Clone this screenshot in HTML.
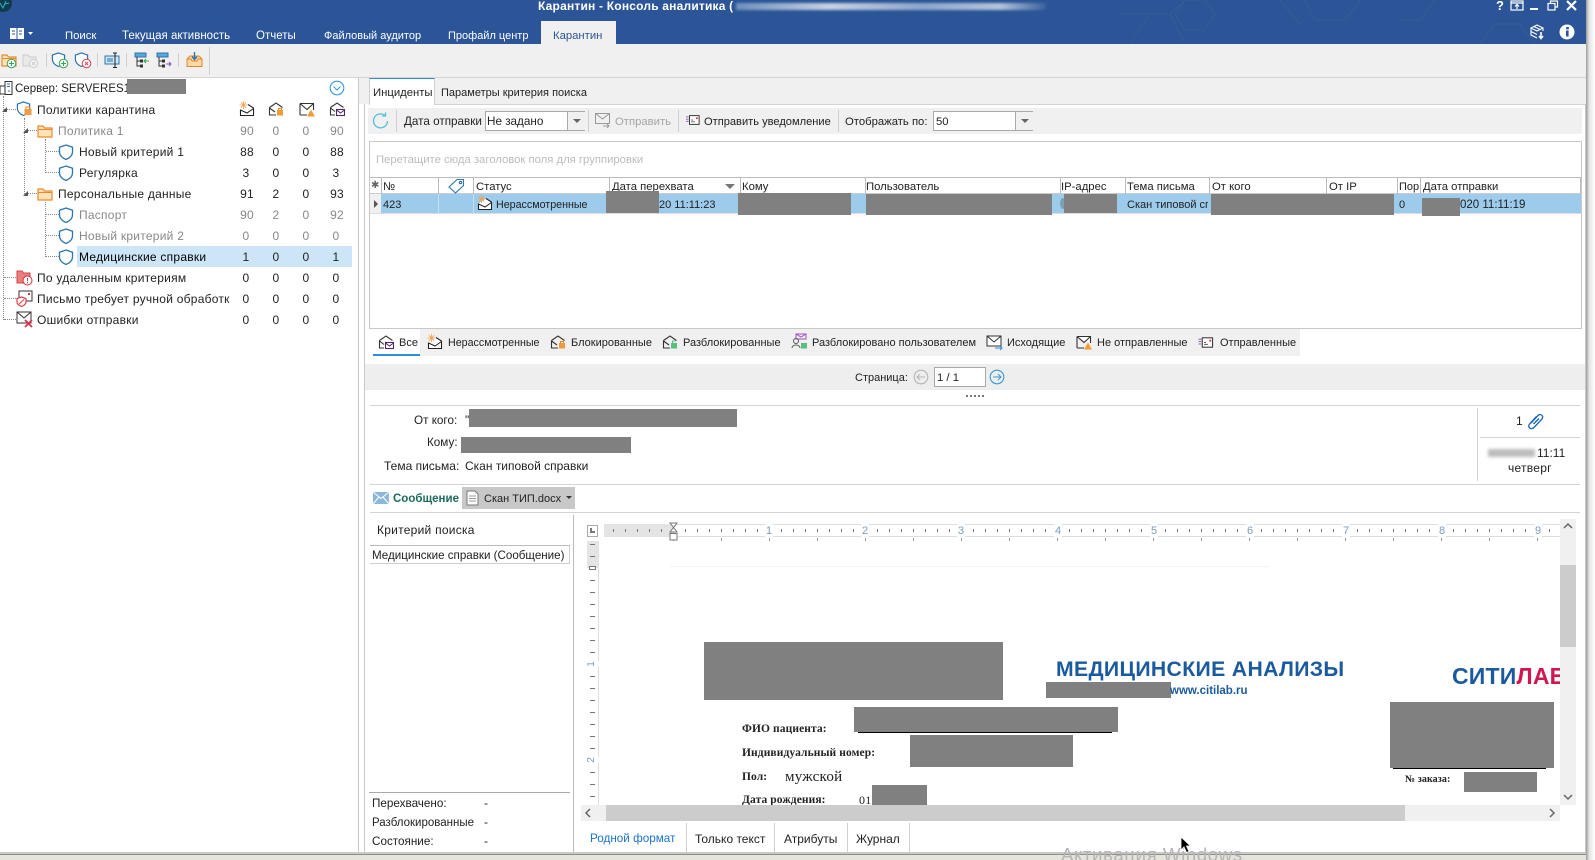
<!DOCTYPE html>
<html lang="ru">
<head>
<meta charset="utf-8">
<title>Карантин - Консоль аналитика</title>
<style>
html,body{margin:0;padding:0;width:1595px;height:860px;overflow:hidden;background:#fff;}
body{position:relative;font-family:"Liberation Sans","DejaVu Sans",sans-serif;font-size:12px;color:#222;}
.a{position:absolute;}
.t{position:absolute;white-space:nowrap;line-height:14px;height:14px;letter-spacing:.25px;}
.f11{font-size:11px;letter-spacing:0;margin-top:1px;}
.f111{font-size:11.1px;letter-spacing:0;margin-top:1px;}
.f107{font-size:10.7px;letter-spacing:0;margin-top:1px;}
.f113{font-size:11.3px;letter-spacing:0;margin-top:1px;}
.f115{font-size:11.5px;letter-spacing:0;margin-top:1px;}
.f117{font-size:11.7px;letter-spacing:0;margin-top:1px;}
.f12{letter-spacing:0;margin-top:1px;}
.c{text-align:center;width:30px;}
.g{color:#888;}
.r{position:absolute;background:#808080;}
.w{color:#fff;}
.i{position:absolute;overflow:visible;}
.h{position:absolute;top:177px;height:17px;width:1px;background:#bbb;}
.hl{position:absolute;background:#d4d4d4;height:1px;}
.vl{position:absolute;background:#d0d0d0;width:1px;}
.dv{position:absolute;border-left:1px dotted #888;width:0;}
.dh{position:absolute;border-top:1px dotted #888;height:0;}
.tr{position:absolute;width:0;height:0;border-left:5px solid transparent;border-bottom:5px solid #555;}
.sep{position:absolute;width:1px;background:#cfcfcf;}
.s{font-family:"Liberation Serif",serif;font-weight:bold;font-size:11.5px;color:#222;letter-spacing:.1px;}
.tree .t{margin-top:1px;}
.rn{color:#7a9cc0;font-size:11px;background:#fff;padding:0 1px;letter-spacing:0;top:524px;}
</style>
</head>
<body>
<svg width="0" height="0" style="position:absolute">
<defs>
<symbol id="shield" viewBox="0 0 16 16"><path d="M8 1 L14.5 3.2 V8 C14.5 11.5 11.5 14 8 15.5 C4.5 14 1.5 11.5 1.5 8 V3.2 Z" fill="#fff" stroke="#2a76ad" stroke-width="1.3"/></symbol>
<symbol id="folder" viewBox="0 0 16 16"><path d="M1 3 H6 L7.5 5 H15 V14 H1 Z" fill="#fde3b6" stroke="#ea8a2e" stroke-width="1.2"/><path d="M1 6.5 H15" stroke="#ea8a2e"/></symbol>
<symbol id="new" viewBox="0 0 16 16"><path d="M9 3.500 L14.500 7 V14.500 H1.500 V8.500" fill="#fff" stroke="#222" stroke-width="1.100"/><path d="M1.500 9 L8 12 L14.500 7.500" fill="none" stroke="#222"/><path d="M4.500 0 V8 M.5 4 H8.500 M1.800 1.300 L7.200 6.700 M7.200 1.300 L1.800 6.700" stroke="#f5a04c" stroke-width=".8"/></symbol>
<symbol id="lock" viewBox="0 0 16 16"><path d="M1.5 6.5 L8 2 L14.5 6.5 M1.5 6.5 V14 H8 M1.5 7 L7 11" fill="none" stroke="#333" stroke-width="1.1"/><rect x="9" y="9" width="6" height="5.5" fill="#f39a3c"/><path d="M10.5 9 V7.5 H13.5 V9" fill="none" stroke="#f08a24"/></symbol>
<symbol id="unlock" viewBox="0 0 16 16"><path d="M1.5 6.5 L8 2 L14.5 6.5 M1.5 6.5 V14 H8 M1.5 7 L7 11" fill="none" stroke="#333" stroke-width="1.1"/><rect x="9" y="9" width="6" height="5.5" fill="#54c27a"/><path d="M10.5 9 V7 H13.5" fill="none" stroke="#54c27a"/></symbol>
<symbol id="warn" viewBox="0 0 16 16"><path d="M1 2.5 H14.5 V9 M8 14 H1 Z" fill="#fff" stroke="#333" stroke-width="1.1"/><path d="M1 2.5 V14 M1 2.5 L8 8.5 L14.5 2.5" fill="none" stroke="#333" stroke-width="1.1"/><path d="M12 8.5 L16 15.5 H8 Z" fill="#f39a3c"/></symbol>
<symbol id="all" viewBox="0 0 16 16"><path d="M1.5 6.5 L8 2 L14.5 6.5 M1.5 6.5 V14 H6 M1.5 7 L6 10.5" fill="none" stroke="#333" stroke-width="1.1"/><rect x="7.5" y="8.5" width="8" height="6" fill="#fff" stroke="#4b2a66" stroke-width="1.1"/><path d="M7.5 9 L11.5 12 L15.5 9" fill="none" stroke="#4b2a66"/></symbol>
<symbol id="sent" viewBox="0 0 16 16"><rect x="4" y="3" width="11" height="10" fill="#fff" stroke="#333" stroke-width="1.1"/><path d="M0 4.5 H3 M0 7 H3 M0 9.5 H3" stroke="#8a4fc0"/><path d="M6 10 H10 M6 8 H8" stroke="#555"/><rect x="11.5" y="5" width="2" height="2" fill="#e0304a"/></symbol>
<symbol id="circle" viewBox="0 0 16 16"><circle cx="8" cy="8" r="6.8" fill="none" stroke="currentColor" stroke-width="1.1"/></symbol>
</defs>
</svg>

<!-- header -->
<div class="a" style="left:0;top:0;width:1586px;height:44px;background:#2b5597;overflow:hidden;">
<svg class="i" style="left:1100px;top:0" width="486" height="44" fill="none" stroke="#335c9b" stroke-width="1"><path d="M30 44 L50 14 H70 L85 44 M70 14 L85 0 M50 14 L20 14 M85 0 L105 0 L115 14 L105 30 H85 L75 14 Z M300 20 L320 20 L335 0 M205 0 L215 20 H245 L260 0 M180 0 L200 24 M380 44 L395 24 H420 L435 44"/></svg>
</div>
<svg class="i" style="left:0;top:0" width="12" height="13"><circle cx="3" cy="3" r="9" fill="#123a4d"/><path d="M0 3 L3 8 L6 1 M5 4 L9 3" stroke="#2ab0c8" fill="none"/></svg>
<div class="t w" style="left:538px;top:-1px;font-weight:bold;letter-spacing:.2px;">Карантин - Консоль аналитика (</div>
<div class="a" style="left:736px;top:3px;width:310px;height:7px;background:linear-gradient(90deg,#6f8fbd,#c7d2e2 30%,#8ea6ca 60%,#b5c4da 85%,#3a629f);filter:blur(1.2px);"></div>
<div class="t w" style="left:1496px;top:-1px;font-weight:bold;font-size:13px;">?</div>
<svg class="i" style="left:1510px;top:0" width="75" height="12" fill="none" stroke="#fff" stroke-width="1.2"><rect x="1" y="1" width="12" height="9"/><path d="M1 3 H13 M7 9 V5 M5 6.5 L7 4.5 L9 6.5"/><path d="M20 9 H28" stroke-width="2"/><rect x="38" y="3.5" width="7" height="6.5"/><path d="M40.5 3 V1 H47.5 V7 H45.5"/><path d="M57 1 L66 10 M66 1 L57 10" stroke-width="2.2"/></svg>
<svg class="i" style="left:10px;top:28px" width="24" height="12"><rect x="0" y="0" width="14" height="11" fill="#fff"/><path d="M7 0 V11" stroke="#2b5597"/><path d="M2 3 H5 M2 6 H5 M9 3 H12 M9 6 H12" stroke="#2b5597"/><path d="M18 4 H23 L20.500 7 Z" fill="#fff"/></svg>
<div class="t w f113" style="left:65px;top:28px;">Поиск</div>
<div class="t w f115" style="left:122px;top:28px;">Текущая активность</div>
<div class="t w f115" style="left:256px;top:28px;">Отчеты</div>
<div class="t w f11" style="left:324px;top:28px;">Файловый аудитор</div>
<div class="t w f11" style="left:448px;top:28px;">Профайл центр</div>
<div class="a" style="left:541px;top:21px;width:75px;height:23px;background:#f0f0f0;"></div>
<div class="t f113" style="left:553px;top:28px;color:#2b5597;">Карантин</div>
<svg class="i" style="left:1530px;top:24px" width="16" height="16" fill="none" stroke="#fff" stroke-width="1.1"><path d="M1 4 L7 1 L13 4 L7 7 Z M1 4 V11 L7 14 M13 4 V7 M1 7.500 L7 10.500 M4 2.500 L10 5.500"/><path d="M11 8 V14 M9 12 L11 14.500 L13 12" stroke-width="1.6"/></svg>
<svg class="i" style="left:1559px;top:24px" width="16" height="16"><circle cx="8" cy="8" r="7.500" fill="#fff"/><rect x="7" y="6.500" width="2.600" height="6" fill="#2b5597"/><rect x="7.200" y="3" width="2.600" height="2.400" fill="#2b5597"/></svg>

<!-- main toolbar -->
<div class="a" style="left:0;top:44px;width:1586px;height:33px;background:#f0f0f0;"></div>
<div class="a" style="left:0;top:77px;width:1586px;height:1px;background:#d4d4d4;"></div>
<div class="sep" style="left:46px;top:53px;height:14px;"></div>
<div class="sep" style="left:97px;top:53px;height:14px;"></div>
<div class="sep" style="left:126px;top:53px;height:14px;"></div>
<div class="sep" style="left:178px;top:53px;height:14px;"></div>
<div class="sep" style="left:209px;top:47px;height:28px;"></div>
<svg class="i" style="left:0;top:52px" width="18" height="16"><use href="#folder"/><circle cx="11.500" cy="11.500" r="4.300" fill="#fff" stroke="#35a853"/><path d="M11.500 9 V14 M9 11.500 H14" stroke="#35a853"/></svg>
<svg class="i" style="left:22px;top:52px;opacity:.35" width="18" height="16"><path d="M1 3 H6 L7.500 5 H14 V14 H1 Z" fill="#ddd" stroke="#888"/><circle cx="11.500" cy="11.500" r="4" fill="#fff" stroke="#888"/><path d="M10 10 L13 13 M13 10 L10 13" stroke="#888"/></svg>
<svg class="i" style="left:51px;top:52px" width="18" height="17"><use href="#shield" width="15" height="15"/><circle cx="12.500" cy="11.500" r="4.300" fill="#fff" stroke="#35a853"/><path d="M12.500 9 V14 M10 11.500 H15" stroke="#35a853"/></svg>
<svg class="i" style="left:74px;top:52px" width="18" height="17"><use href="#shield" width="15" height="15"/><circle cx="12.500" cy="11.500" r="4.300" fill="#fff" stroke="#e0404f"/><path d="M11 10 L14 13 M14 10 L11 13" stroke="#e0404f"/></svg>
<svg class="i" style="left:104px;top:52px" width="16" height="17" fill="none"><rect x="1" y="4" width="14" height="8" fill="#cfe5f5" stroke="#2a76ad"/><path d="M3 7 H9 M3 9 H9" stroke="#2a76ad"/><path d="M11 1 V15 M9 1 H13 M9 15.500 H13" stroke="#222"/></svg>
<svg class="i" style="left:134px;top:52px" width="16" height="17" fill="none"><rect x="1" y="1" width="11" height="4" fill="#5aa7dc" stroke="#2a76ad"/><path d="M3 5 V14 H6 M3 9 H6" stroke="#333"/><rect x="6" y="7.500" width="3" height="3" fill="#333"/><rect x="6" y="12.500" width="3" height="3" fill="#333"/><path d="M15 9 H10 M12 7 L10 9 L12 11" stroke="#35a853"/></svg>
<svg class="i" style="left:156px;top:52px" width="16" height="17" fill="none"><rect x="1" y="1" width="11" height="4" fill="#5aa7dc" stroke="#2a76ad"/><path d="M3 5 V14 H6 M3 9 H6" stroke="#333"/><rect x="6" y="7.500" width="3" height="3" fill="#333"/><rect x="6" y="12.500" width="3" height="3" fill="#333"/><path d="M10 12 H15 M13 10 L15 12 L13 14" stroke="#8a4fc0"/></svg>
<svg class="i" style="left:186px;top:51px" width="17" height="17" fill="none"><path d="M1 8 L4 5 H13 L16 8 V15.500 H1 Z" fill="#fcd9a6" stroke="#e8852b"/><path d="M1 8 H5 L6 10 H11 L12 8 H16" stroke="#e8852b"/><path d="M8.500 1 V8 M6 5.500 L8.500 8.500 L11 5.500" stroke="#2a76ad" stroke-width="1.400"/></svg>

<!-- left tree -->
<div class="tree">
<div class="a" style="left:358px;top:78px;width:1px;height:774px;background:#c8c8c8;"></div>
<div class="dv" style="left:3px;top:96px;height:224px;"></div>
<div class="dv" style="left:24px;top:118px;height:76px;"></div>
<div class="dv" style="left:45px;top:139px;height:34px;"></div>
<div class="dv" style="left:45px;top:202px;height:55px;"></div>
<div class="dh" style="left:4px;top:109px;width:12px;"></div>
<div class="dh" style="left:25px;top:130px;width:12px;"></div>
<div class="dh" style="left:25px;top:193px;width:12px;"></div>
<div class="dh" style="left:46px;top:151px;width:13px;"></div>
<div class="dh" style="left:46px;top:172px;width:13px;"></div>
<div class="dh" style="left:46px;top:214px;width:13px;"></div>
<div class="dh" style="left:46px;top:235px;width:13px;"></div>
<div class="dh" style="left:46px;top:256px;width:13px;"></div>
<div class="dh" style="left:4px;top:277px;width:12px;"></div>
<div class="dh" style="left:4px;top:298px;width:12px;"></div>
<div class="dh" style="left:4px;top:319px;width:12px;"></div>
<div class="tr" style="left:2px;top:107px;"></div>
<div class="tr" style="left:23px;top:128px;"></div>
<div class="tr" style="left:23px;top:191px;"></div>
<div class="a" style="left:77px;top:246px;width:275px;height:21px;background:#cde6f7;"></div>

<svg class="i" style="left:-1px;top:80px" width="15" height="17" fill="#fff" stroke="#333"><rect x="1" y="6" width="7" height="8"/><rect x="6" y="1.500" width="7" height="13"/><path d="M8 4 H11 M8 6.500 H11" stroke="#2a76ad"/><path d="M10 10 V12" stroke="#2a76ad"/></svg>
<div class="t f115" style="left:15px;top:81px;">Сервер: SERVERES1</div>
<div class="r" style="left:127px;top:79px;width:59px;height:15px;"></div>
<svg class="i" style="left:329px;top:80px;color:#3a9ad9" width="16" height="16"><use href="#circle"/><path d="M4.500 6.500 L8 10 L11.500 6.500" fill="none" stroke="#3a9ad9"/></svg>

<svg class="i" style="left:16px;top:101px" width="17" height="16"><use href="#shield" width="15" height="15"/><rect x="8.500" y="8" width="7" height="6" fill="#f39a3c"/><path d="M10 8 V6 H14 V8" fill="none" stroke="#f08a24"/></svg>
<div class="t" style="left:37px;top:102px;">Политики карантина</div>
<svg class="i" style="left:239px;top:101px" width="16" height="16"><use href="#new"/></svg>
<svg class="i" style="left:268px;top:101px" width="16" height="16"><use href="#lock"/></svg>
<svg class="i" style="left:299px;top:101px" width="16" height="16"><use href="#warn"/></svg>
<svg class="i" style="left:329px;top:101px" width="16" height="16"><use href="#all"/></svg>

<svg class="i" style="left:37px;top:123px" width="16" height="16"><use href="#folder"/></svg>
<div class="t g" style="left:58px;top:123px;">Политика 1</div>
<div class="t c g" style="left:232px;top:123px;">90</div><div class="t c g" style="left:261px;top:123px;">0</div><div class="t c g" style="left:291px;top:123px;">0</div><div class="t c g" style="left:322px;top:123px;">90</div>

<svg class="i" style="left:58px;top:144px" width="16" height="16"><use href="#shield"/></svg>
<div class="t" style="left:79px;top:144px;">Новый критерий 1</div>
<div class="t c" style="left:232px;top:144px;">88</div><div class="t c" style="left:261px;top:144px;">0</div><div class="t c" style="left:291px;top:144px;">0</div><div class="t c" style="left:322px;top:144px;">88</div>

<svg class="i" style="left:58px;top:165px" width="16" height="16"><use href="#shield"/></svg>
<div class="t" style="left:79px;top:165px;">Регулярка</div>
<div class="t c" style="left:231px;top:165px;">3</div><div class="t c" style="left:261px;top:165px;">0</div><div class="t c" style="left:291px;top:165px;">0</div><div class="t c" style="left:321px;top:165px;">3</div>

<svg class="i" style="left:37px;top:186px" width="16" height="16"><use href="#folder"/></svg>
<div class="t" style="left:58px;top:186px;">Персональные данные</div>
<div class="t c" style="left:232px;top:186px;">91</div><div class="t c" style="left:261px;top:186px;">2</div><div class="t c" style="left:291px;top:186px;">0</div><div class="t c" style="left:322px;top:186px;">93</div>

<svg class="i" style="left:58px;top:207px" width="16" height="16"><use href="#shield"/></svg>
<div class="t g" style="left:79px;top:207px;">Паспорт</div>
<div class="t c g" style="left:232px;top:207px;">90</div><div class="t c g" style="left:261px;top:207px;">2</div><div class="t c g" style="left:291px;top:207px;">0</div><div class="t c g" style="left:322px;top:207px;">92</div>

<svg class="i" style="left:58px;top:228px" width="16" height="16"><use href="#shield"/></svg>
<div class="t g" style="left:79px;top:228px;">Новый критерий 2</div>
<div class="t c g" style="left:231px;top:228px;">0</div><div class="t c g" style="left:261px;top:228px;">0</div><div class="t c g" style="left:291px;top:228px;">0</div><div class="t c g" style="left:321px;top:228px;">0</div>

<svg class="i" style="left:58px;top:249px" width="16" height="16"><use href="#shield"/></svg>
<div class="t" style="left:79px;top:249px;color:#000;">Медицинские справки</div>
<div class="t c" style="left:231px;top:249px;">1</div><div class="t c" style="left:261px;top:249px;">0</div><div class="t c" style="left:291px;top:249px;">0</div><div class="t c" style="left:321px;top:249px;">1</div>

<svg class="i" style="left:16px;top:269px" width="17" height="17"><path d="M1 2 H6 L7.500 4 H14 V14 H1 Z" fill="#ea7f7f" stroke="#d84040"/><circle cx="11.500" cy="11.500" r="4.500" fill="#fff" stroke="#d03030"/><path d="M11.500 9 V12 M11.500 13 V14.200" stroke="#d03030"/></svg>
<div class="t" style="left:37px;top:270px;">По удаленным критериям</div>
<div class="t c" style="left:231px;top:270px;">0</div><div class="t c" style="left:261px;top:270px;">0</div><div class="t c" style="left:291px;top:270px;">0</div><div class="t c" style="left:321px;top:270px;">0</div>

<svg class="i" style="left:16px;top:290px" width="17" height="17"><rect x="3" y="1" width="13" height="10" fill="#fff" stroke="#333"/><rect x="12" y="3" width="2" height="2" fill="#e0304a"/><path d="M5.500 7 L10 8.500 V12 C10 14 8 15.500 5.500 16.500 C3 15.500 1 14 1 12 V8.500 Z" fill="#fff" stroke="#d84040" stroke-width="1.200"/><path d="M3 14 L8 9.500" stroke="#d84040"/></svg>
<div class="t" style="left:37px;top:291px;">Письмо требует ручной обработк</div>
<div class="t c" style="left:231px;top:291px;">0</div><div class="t c" style="left:261px;top:291px;">0</div><div class="t c" style="left:291px;top:291px;">0</div><div class="t c" style="left:321px;top:291px;">0</div>

<svg class="i" style="left:16px;top:311px" width="17" height="17"><rect x="1" y="1" width="14" height="11" fill="#fff" stroke="#333"/><path d="M1 1 L8 7 L15 1" fill="none" stroke="#333"/><path d="M9 9 L16 16 M16 9 L9 16" stroke="#e0304a" stroke-width="1.800"/></svg>
<div class="t" style="left:37px;top:312px;">Ошибки отправки</div>
<div class="t c" style="left:231px;top:312px;">0</div><div class="t c" style="left:261px;top:312px;">0</div><div class="t c" style="left:291px;top:312px;">0</div><div class="t c" style="left:321px;top:312px;">0</div>
</div>

<!-- right pane tabs -->
<div class="a" style="left:359px;top:78px;width:1227px;height:26px;background:#f0f0f0;"></div>
<div class="a" style="left:369px;top:104px;width:1217px;height:1px;background:#d4d4d4;"></div>
<div class="a" style="left:369px;top:78px;width:66px;height:27px;background:#fff;border-top:1px solid #2a8de0;box-sizing:border-box;border-right:1px solid #d0d0d0;border-left:1px solid #d0d0d0;"></div>
<div class="t f113" style="left:373px;top:85px;">Инциденты</div>
<div class="t f11" style="left:441px;top:85px;">Параметры критерия поиска</div>
<div class="a" style="left:364px;top:104px;width:1px;height:748px;background:#c8c8c8;"></div>
<div class="a" style="left:1585px;top:104px;width:1px;height:748px;background:#c8c8c8;"></div>

<!-- incidents toolbar -->
<div class="a" style="left:368px;top:108px;width:1214px;height:26px;background:#f0f0f0;"></div>
<svg class="i" style="left:372px;top:112px" width="18" height="18" fill="none" stroke="#55bfe0" stroke-width="1.300"><path d="M15.500 9 A7 7 0 1 1 13 3.500"/><path d="M13.500 0.500 V4 H10"/></svg>
<div class="sep" style="left:396px;top:110px;height:22px;"></div>
<div class="t f117" style="left:404px;top:114px;">Дата отправки</div>
<div class="a" style="left:485px;top:111px;width:100px;height:20px;background:#fff;border:1px solid #aaa;box-sizing:border-box;"></div>
<div class="a" style="left:567px;top:112px;width:17px;height:18px;background:#f0f0f0;border-left:1px solid #aaa;"></div>
<div class="a" style="left:573px;top:119px;border-left:4px solid transparent;border-right:4px solid transparent;border-top:4px solid #666;"></div>
<div class="t f117" style="left:487px;top:114px;">Не задано</div>
<div class="sep" style="left:588px;top:110px;height:22px;"></div>
<svg class="i" style="left:595px;top:112px" width="16" height="16" fill="none" stroke="#999"><rect x="0.500" y="1.500" width="14" height="10"/><path d="M0.500 1.500 L7.500 7 L14.500 1.500 M8 14 H14 M12 12 L14 14 L12 16"/></svg>
<div class="t f113" style="left:615px;top:114px;color:#a5a5a5;">Отправить</div>
<div class="sep" style="left:678px;top:110px;height:22px;"></div>
<svg class="i" style="left:685px;top:113px" width="16" height="14"><use href="#sent" width="16" height="14"/></svg>
<div class="t f111" style="left:704px;top:114px;">Отправить уведомление</div>
<div class="sep" style="left:838px;top:110px;height:22px;"></div>
<div class="t f113" style="left:845px;top:114px;">Отображать по:</div>
<div class="a" style="left:933px;top:111px;width:100px;height:20px;background:#fff;border:1px solid #aaa;box-sizing:border-box;"></div>
<div class="a" style="left:1015px;top:112px;width:17px;height:18px;background:#f0f0f0;border-left:1px solid #aaa;"></div>
<div class="a" style="left:1021px;top:119px;border-left:4px solid transparent;border-right:4px solid transparent;border-top:4px solid #666;"></div>
<div class="t f113" style="left:936px;top:114px;">50</div>

<!-- grid -->
<div class="a" style="left:369px;top:141px;width:1213px;height:188px;border:1px solid #c8c8c8;box-sizing:border-box;"></div>
<div class="t f113" style="left:376px;top:152px;color:#bcbcbc;">Перетащите сюда заголовок поля для группировки</div>
<div class="a" style="left:370px;top:177px;width:1211px;height:1px;background:#bbb;"></div>
<div class="a" style="left:370px;top:193px;width:1211px;height:1px;background:#ccc;"></div>
<div class="a" style="left:381px;top:194px;width:1200px;height:19px;background:#9ccbec;"></div>
<div class="a" style="left:370px;top:194px;width:11px;height:19px;background:#f0f0f0;"></div>
<div class="a" style="left:370px;top:213px;width:1211px;height:1px;background:#ddd;"></div>
<div class="h" style="left:381px"></div><div class="h" style="left:438px"></div><div class="h" style="left:473px"></div><div class="h" style="left:609px"></div><div class="h" style="left:740px"></div><div class="h" style="left:865px"></div><div class="h" style="left:1060px"></div><div class="h" style="left:1125px"></div><div class="h" style="left:1209px"></div><div class="h" style="left:1326px"></div><div class="h" style="left:1397px"></div><div class="h" style="left:1420px"></div><div class="h" style="left:1580px"></div>
<div class="a" style="left:438px;top:194px;width:1px;height:19px;background:#c4dff3;"></div>
<div class="a" style="left:473px;top:194px;width:1px;height:19px;background:#c4dff3;"></div>
<div class="t" style="left:371px;top:179px;font-size:10px;color:#666;letter-spacing:0;">✱</div>
<div class="t f113" style="left:383px;top:179px;">№</div>
<svg class="i" style="left:448px;top:178px" width="17" height="16" fill="none" stroke="#2a76ad" stroke-width="1.100"><path d="M1 9 L9 1.500 H15.500 V7.500 L7.500 15 Z"/><circle cx="12.500" cy="4.500" r="1.200"/></svg>
<div class="t f113" style="left:476px;top:179px;">Статус</div>
<div class="t f113" style="left:612px;top:179px;">Дата перехвата</div>
<div class="a" style="left:725px;top:184px;border-left:5px solid transparent;border-right:5px solid transparent;border-top:5px solid #777;"></div>
<div class="t f113" style="left:742px;top:179px;">Кому</div>
<div class="t f113" style="left:866px;top:179px;">Пользователь</div>
<div class="t f113" style="left:1061px;top:179px;">IP-адрес</div>
<div class="t f113" style="left:1127px;top:179px;">Тема письма</div>
<div class="t f113" style="left:1212px;top:179px;">От кого</div>
<div class="t f113" style="left:1329px;top:179px;">От IP</div>
<div class="t f11" style="left:1399px;top:179px;">Пор</div>
<div class="t f113" style="left:1423px;top:179px;">Дата отправки</div>
<div class="a" style="left:374px;top:200px;border-top:4px solid transparent;border-bottom:4px solid transparent;border-left:4px solid #555;"></div>
<div class="t f11" style="left:383px;top:197px;">423</div>
<svg class="i" style="left:477px;top:195px" width="16" height="16"><use href="#new"/></svg>
<div class="t f107" style="left:496px;top:197px;">Нерассмотренные</div>
<div class="r" style="left:606px;top:191px;width:53px;height:22px;"></div>
<div class="t f11" style="left:659px;top:197px;">20 11:11:23</div>
<div class="r" style="left:738px;top:193px;width:113px;height:22px;"></div>
<div class="r" style="left:866px;top:194px;width:186px;height:21px;"></div>
<div class="a" style="left:1060px;top:198px;width:6px;height:11px;border-radius:50%;background:#7f9fb5;"></div>
<div class="r" style="left:1064px;top:194px;width:53px;height:19px;"></div>
<div class="a" style="left:1126px;top:198px;width:82px;height:14px;overflow:hidden;"><div class="t" style="left:1px;top:0;font-size:11px;letter-spacing:0;">Скан типовой справки</div></div>
<div class="r" style="left:1211px;top:194px;width:183px;height:21px;"></div>
<div class="t f11" style="left:1399px;top:197px;">0</div>
<div class="r" style="left:1422px;top:198px;width:38px;height:18px;"></div>
<div class="t f115" style="left:1460px;top:197px;">020 11:11:19</div>

<!-- filter tabs -->
<div class="a" style="left:373px;top:329px;width:927px;height:27px;background:#f0f0f0;"></div>
<div class="a" style="left:373px;top:329px;width:47px;height:27px;background:#fff;border-bottom:2px solid #2a8de0;box-sizing:border-box;"></div>
<svg class="i" style="left:378px;top:334px" width="16" height="16"><use href="#all"/></svg>
<div class="t f11" style="left:399px;top:335px;">Все</div>
<svg class="i" style="left:427px;top:334px" width="16" height="16"><use href="#new"/></svg>
<div class="t f107" style="left:448px;top:335px;">Нерассмотренные</div>
<svg class="i" style="left:550px;top:334px" width="16" height="16"><use href="#lock"/></svg>
<div class="t f11" style="left:571px;top:335px;">Блокированные</div>
<svg class="i" style="left:662px;top:334px" width="16" height="16"><use href="#unlock"/></svg>
<div class="t f11" style="left:683px;top:335px;">Разблокированные</div>
<svg class="i" style="left:791px;top:333px" width="16" height="17" fill="none"><path d="M5 1 H15 V6 H5 Z M5 1 L10 4 L15 1" stroke="#a04fc0"/><circle cx="5" cy="8" r="2.500" stroke="#555"/><path d="M1 15 C1 11 9 11 9 15" stroke="#555"/><rect x="10" y="10" width="6" height="5.500" fill="#54c27a"/></svg>
<div class="t f11" style="left:812px;top:335px;">Разблокировано пользователем</div>
<svg class="i" style="left:986px;top:334px" width="17" height="16" fill="none"><rect x="1" y="2" width="14" height="10" stroke="#333" fill="#fff"/><path d="M1 2 L8 8 L15 2" stroke="#333"/><path d="M9 14 H16 M14 12 L16 14 L14 16" stroke="#2a8de0"/></svg>
<div class="t f11" style="left:1007px;top:335px;">Исходящие</div>
<svg class="i" style="left:1076px;top:334px" width="16" height="16"><use href="#warn"/></svg>
<div class="t f11" style="left:1097px;top:335px;">Не отправленные</div>
<svg class="i" style="left:1198px;top:335px" width="16" height="15"><use href="#sent" width="16" height="15"/></svg>
<div class="t f11" style="left:1220px;top:335px;">Отправленные</div>

<!-- page bar -->
<div class="a" style="left:365px;top:364px;width:1220px;height:26px;background:#eee;"></div>
<div class="t f11" style="left:855px;top:370px;">Страница:</div>
<svg class="i" style="left:913px;top:369px;color:#b5b5b5" width="16" height="16"><use href="#circle"/><path d="M12 8 H4 M7 5 L4 8 L7 11" fill="none" stroke="#b5b5b5"/></svg>
<div class="a" style="left:934px;top:367px;width:52px;height:20px;background:#fff;border:1px solid #aaa;box-sizing:border-box;"></div>
<div class="t f113" style="left:937px;top:370px;">1 / 1</div>
<svg class="i" style="left:989px;top:369px;color:#3a9ad9" width="16" height="16"><use href="#circle"/><path d="M4 8 H12 M9 5 L12 8 L9 11" fill="none" stroke="#3a9ad9"/></svg>
<div class="a" style="left:966px;top:395px;width:19px;height:2px;background:repeating-linear-gradient(90deg,#777 0 2px,transparent 2px 4px);"></div>

<!-- message header -->
<div class="hl" style="left:370px;top:405px;width:1210px;"></div>
<div class="t f117" style="left:414px;top:413px;">От кого:</div>
<div class="t" style="left:465px;top:413px;">"</div>
<div class="r" style="left:469px;top:409px;width:268px;height:18px;"></div>
<div class="t f117" style="left:427px;top:435px;">Кому:</div>
<div class="r" style="left:461px;top:437px;width:170px;height:16px;"></div>
<div class="t f12" style="left:384px;top:458px;">Тема письма:</div>
<div class="t f12" style="left:465px;top:458px;">Скан типовой справки</div>
<div class="vl" style="left:1477px;top:408px;height:73px;"></div>
<div class="hl" style="left:1480px;top:437px;width:100px;"></div>
<div class="t" style="left:1516px;top:414px;">1</div>
<svg class="i" style="left:1527px;top:413px" width="17" height="17" fill="none" stroke="#1a66c0" stroke-width="1.300"><path d="M4 10 L11 2.500 C13.500 0 17 3 15 6 L7 14.500 C4 17.500 0 14 2.500 11 L9.500 3.500 M6.500 11 L12 5.500"/></svg>
<div class="a" style="left:1488px;top:449px;width:47px;height:8px;background:#bdbdbd;filter:blur(1.500px);"></div>
<div class="t" style="left:1537px;top:446px;letter-spacing:0;">11:11</div>
<div class="t" style="left:1508px;top:461px;">четверг</div>
<div class="hl" style="left:370px;top:484px;width:1210px;"></div>

<!-- attachments -->
<svg class="i" style="left:373px;top:492px" width="16" height="12"><rect width="16" height="12" fill="#8cb7dc"/><path d="M0 0 L8 6.500 L16 0 M0 12 L6 5 M16 12 L10 5" fill="none" stroke="#fff"/></svg>
<div class="t f115" style="left:393px;top:491px;font-weight:bold;color:#1a6b5a;">Сообщение</div>
<div class="a" style="left:462px;top:487px;width:113px;height:22px;background:#c8c8c8;"></div>
<svg class="i" style="left:466px;top:490px" width="13" height="16"><path d="M1 1 H9 L12 4 V15 H1 Z" fill="#fff" stroke="#777"/><path d="M3 6 H10 M3 8.500 H10 M3 11 H10" stroke="#999"/></svg>
<div class="t f11" style="left:484px;top:491px;">Скан ТИП.docx</div>
<div class="a" style="left:566px;top:496px;border-left:3px solid transparent;border-right:3px solid transparent;border-top:3px solid #333;"></div>
<div class="hl" style="left:370px;top:512px;width:1210px;"></div>
<div class="vl" style="left:573px;top:515px;height:337px;background:#bbb;"></div>

<!-- criteria panel -->
<div class="t" style="left:377px;top:523px;">Критерий поиска</div>
<div class="a" style="left:370px;top:545px;width:200px;height:19px;border-top:1px solid #bbb;border-bottom:1px solid #d0d0d0;border-right:1px solid #d0d0d0;box-sizing:border-box;"></div>
<div class="t" style="left:372px;top:549px;font-size:11.6px;letter-spacing:0;">Медицинские справки (Сообщение)</div>
<div class="a" style="left:369px;top:792px;width:201px;height:1px;background:#aaa;"></div>
<div class="t f117" style="left:372px;top:796px;">Перехвачено:</div><div class="t" style="left:484px;top:796px;">-</div>
<div class="t f115" style="left:372px;top:815px;">Разблокированные</div><div class="t" style="left:484px;top:815px;">-</div>
<div class="t f117" style="left:372px;top:834px;">Состояние:</div><div class="t" style="left:484px;top:834px;">-</div>

<!-- ruler -->
<div class="a" style="left:587px;top:525px;width:11px;height:12px;border:1px solid #aaa;box-sizing:border-box;background:#fff;"></div>
<div class="a" style="left:590px;top:528px;width:5px;height:5px;border-left:2px solid #777;border-bottom:2px solid #777;box-sizing:border-box;"></div>
<div class="a" style="left:604px;top:524px;width:956px;height:13px;border-top:1px solid #ddd;border-bottom:1px solid #ddd;box-sizing:border-box;background:#fff;"></div>
<div class="a" style="left:604px;top:524px;width:70px;height:13px;background:#e4e4e4;"></div>
<div class="a" style="left:613px;top:529px;width:947px;height:3px;background:repeating-linear-gradient(90deg,#777 0 1px,transparent 1px 12px);"></div>
<div class="a" style="left:673px;top:538px;width:887px;height:3px;background:repeating-linear-gradient(90deg,#999 0 1px,transparent 1px 48px);"></div>
<svg class="i" style="left:669px;top:522px" width="10" height="19" fill="#fff" stroke="#777"><path d="M1 1 H8 L4.500 5.500 L8 10 H1 L4.500 5.500 Z"/><rect x="1" y="11.500" width="7" height="6.500"/></svg>
<div class="t rn" style="left:765px;">1</div>
<div class="t rn" style="left:861px;">2</div>
<div class="t rn" style="left:957px;">3</div>
<div class="t rn" style="left:1054px;">4</div>
<div class="t rn" style="left:1150px;">5</div>
<div class="t rn" style="left:1246px;">6</div>
<div class="t rn" style="left:1342px;">7</div>
<div class="t rn" style="left:1438px;">8</div>
<div class="t rn" style="left:1534px;">9</div>
<div class="a" style="left:587px;top:541px;width:12px;height:264px;background:#fff;border-right:1px solid #ddd;box-sizing:border-box;"></div>
<div class="a" style="left:587px;top:541px;width:12px;height:27px;background:#e4e4e4;"></div>
<div class="a" style="left:590px;top:544px;width:5px;height:261px;background:repeating-linear-gradient(180deg,#777 0 1px,transparent 1px 12px);"></div>
<div class="a" style="left:589px;top:566px;width:7px;height:4px;border:1px solid #777;box-sizing:border-box;background:#fff;"></div>
<div class="t" style="left:589px;top:657px;color:#7a9cc0;font-size:10px;background:#fff;transform:rotate(-90deg);letter-spacing:0;">1</div>
<div class="t" style="left:589px;top:753px;color:#7a9cc0;font-size:10px;background:#fff;transform:rotate(-90deg);letter-spacing:0;">2</div>

<!-- document -->
<div class="a" style="left:670px;top:566px;width:600px;height:1px;background:#f4f4f4;"></div>
<div class="r" style="left:704px;top:642px;width:299px;height:58px;"></div>
<div class="t" style="left:1056px;top:658px;font-size:21.200px;font-weight:bold;color:#1a5a9e;line-height:24px;height:24px;letter-spacing:.35px;">МЕДИЦИНСКИЕ АНАЛИЗЫ</div>
<div class="r" style="left:1046px;top:682px;width:125px;height:16px;"></div>
<div class="t" style="left:1170px;top:684px;font-size:11.500px;font-weight:bold;color:#1a5a9e;letter-spacing:0;">www.citilab.ru</div>
<div class="a" style="left:1450px;top:660px;width:110px;height:32px;overflow:hidden;"><div class="t" style="left:2px;top:2px;font-size:23px;font-weight:bold;line-height:28px;height:28px;color:#1a5a9e;letter-spacing:.2px;">СИТИ<span style="color:#d0174f">ЛАБ</span></div></div>
<div class="t s" style="left:742px;top:722px;">ФИО пациента:</div>
<div class="a" style="left:858px;top:732px;width:254px;height:1px;background:#000;"></div>
<div class="r" style="left:854px;top:707px;width:264px;height:25px;"></div>
<div class="t s" style="left:742px;top:746px;">Индивидуальный номер:</div>
<div class="r" style="left:910px;top:735px;width:163px;height:32px;"></div>
<div class="t s" style="left:742px;top:770px;">Пол:</div>
<div class="t" style="left:785px;top:769px;font-family:'Liberation Serif',serif;font-size:15px;line-height:16px;height:16px;">мужской</div>
<div class="t s" style="left:742px;top:793px;">Дата рождения:</div>
<div class="t" style="left:859px;top:793px;font-family:'Liberation Serif',serif;">01</div>
<div class="r" style="left:872px;top:785px;width:55px;height:23px;"></div>
<div class="a" style="left:1393px;top:768px;width:153px;height:1px;background:#000;"></div>
<div class="r" style="left:1390px;top:702px;width:164px;height:66px;"></div>
<div class="t s" style="left:1405px;top:773px;font-size:10px;">№ заказа:</div>
<div class="r" style="left:1464px;top:772px;width:73px;height:20px;"></div>

<!-- scrollbars -->
<div class="a" style="left:1560px;top:519px;width:16px;height:286px;background:#f0f0f0;"></div>
<div class="a" style="left:1560px;top:565px;width:16px;height:82px;background:#ccc;"></div>
<svg class="i" style="left:1563px;top:521px" width="10" height="10" fill="none" stroke="#666" stroke-width="1.500"><path d="M1 7 L5 3 L9 7"/></svg>
<svg class="i" style="left:1563px;top:792px" width="10" height="10" fill="none" stroke="#666" stroke-width="1.500"><path d="M1 3 L5 7 L9 3"/></svg>
<div class="a" style="left:581px;top:805px;width:979px;height:16px;background:#f0f0f0;"></div>
<div class="a" style="left:606px;top:805px;width:799px;height:16px;background:#ccc;"></div>
<svg class="i" style="left:583px;top:808px" width="10" height="10" fill="none" stroke="#666" stroke-width="1.500"><path d="M7 1 L3 5 L7 9"/></svg>
<svg class="i" style="left:1547px;top:808px" width="10" height="10" fill="none" stroke="#666" stroke-width="1.500"><path d="M3 1 L7 5 L3 9"/></svg>

<!-- bottom tabs -->
<div class="t f117" style="left:590px;top:831px;color:#1a73d0;">Родной формат</div>
<div class="vl" style="left:686px;top:823px;height:29px;"></div>
<div class="t f12" style="left:695px;top:831px;">Только текст</div>
<div class="vl" style="left:774px;top:823px;height:29px;"></div>
<div class="t f12" style="left:784px;top:831px;">Атрибуты</div>
<div class="vl" style="left:847px;top:823px;height:29px;"></div>
<div class="t f12" style="left:856px;top:831px;">Журнал</div>
<div class="vl" style="left:909px;top:823px;height:29px;"></div>

<!-- bottom edge -->
<div class="a" style="left:0;top:852px;width:1586px;height:2px;background:#c9c9c9;"></div>
<div class="a" style="left:0;top:854px;width:1586px;height:1px;background:#8f8f8a;"></div>
<div class="a" style="left:0;top:855px;width:1586px;height:5px;background:#e6e5dd;"></div>
<div class="t" style="left:1061px;top:845px;font-size:18.800px;line-height:20px;height:20px;color:#b5b5b5;letter-spacing:.5px;">Активация Windows</div>
<div class="a" style="left:1586px;top:0;width:9px;height:860px;background:linear-gradient(90deg,#9a9a9a,#e4e4e4 35%,#fff);"></div>

<!-- cursor -->
<svg class="i" style="left:1180px;top:836px" width="12" height="18"><path d="M1 1 V14 L4 11 L6.500 16.500 L9 15.500 L6.500 10 H10.500 Z" fill="#000" stroke="#fff" stroke-width=".8"/></svg>
</body>
</html>
